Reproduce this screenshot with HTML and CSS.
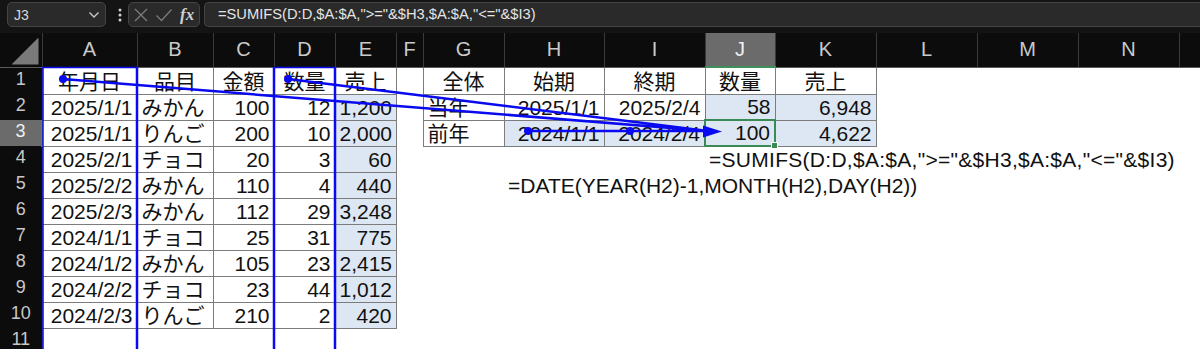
FILE: index.html
```html
<!DOCTYPE html>
<html lang="ja">
<head>
    <meta charset="UTF-8">
    <meta name="viewport" content="width=device-width, initial-scale=1.0">
    <title>SUMIFS</title>
    <link rel="stylesheet" href="styles.css">
</head>
<body>
<div class="page">
    <div class="toolbar">
        <div class="namebox">
            <span>J3</span>
            <svg class="chev" width="12" height="8" viewBox="0 0 12 8"><path d="M1.5 1.5 L6 6 L10.5 1.5" fill="none" stroke="#c8c8c8" stroke-width="1.4"/></svg>
        </div>
        <svg class="grip" width="6" height="16" viewBox="0 0 6 16"><circle cx="3" cy="3" r="1.5" fill="#cfcfcf"/><circle cx="3" cy="8" r="1.5" fill="#cfcfcf"/><circle cx="3" cy="13" r="1.5" fill="#cfcfcf"/></svg>
        <div class="fxbox">
            <svg width="16" height="16" viewBox="0 0 16 16"><path d="M2 2 L14 14 M14 2 L2 14" stroke="#7c7c7c" stroke-width="1.3"/></svg>
            <svg width="18" height="16" viewBox="0 0 18 16"><path d="M1.5 8.5 L6.5 13.5 L16.5 2.5" fill="none" stroke="#7c7c7c" stroke-width="1.3"/></svg>
            <span class="fx">fx</span>
        </div>
        <div class="formula">=SUMIFS(D:D,$A:$A,"&gt;="&amp;$H3,$A:$A,"&lt;="&amp;$I3)</div>
    </div>

    <table class="sheet">
        <colgroup>
            <col style="width:42px"><col style="width:95px"><col style="width:76px"><col style="width:61px">
            <col style="width:61px"><col style="width:61px"><col style="width:27px"><col style="width:81px">
            <col style="width:100px"><col style="width:101px"><col style="width:70px"><col style="width:101px">
            <col style="width:101px"><col style="width:101px"><col style="width:101px"><col style="width:21px">
        </colgroup>
        <tr class="head">
            <th class="corner"><span class="tri"></span></th>
            <th>A</th><th>B</th><th>C</th><th>D</th><th>E</th><th>F</th><th>G</th>
            <th>H</th><th>I</th><th class="sel">J</th><th>K</th><th>L</th><th>M</th><th>N</th><th></th>
        </tr>
        <tr class="r1">
            <th class="rh">1</th>
            <td class="b c">年月日</td><td class="b c">品目</td><td class="b c">金額</td><td class="b c">数量</td><td class="b c">売上</td>
            <td></td>
            <td class="b c">全体</td><td class="b c">始期</td><td class="b c">終期</td><td class="b c">数量</td><td class="b c">売上</td>
            <td></td><td></td><td></td><td></td>
        </tr>
        <tr>
            <th class="rh">2</th>
            <td class="b n">2025/1/1</td><td class="b">みかん</td><td class="b n">100</td><td class="b n">12</td><td class="b n fill">1,200</td>
            <td></td>
            <td class="b">当年</td><td class="b n">2025/1/1</td><td class="b n">2025/2/4</td><td class="b n fill">58</td><td class="b n fill">6,948</td>
            <td></td><td></td><td></td><td></td>
        </tr>
        <tr>
            <th class="rh sel">3</th>
            <td class="b n">2025/1/1</td><td class="b">りんご</td><td class="b n">200</td><td class="b n">10</td><td class="b n fill">2,000</td>
            <td></td>
            <td class="b">前年</td><td class="b n fill">2024/1/1</td><td class="b n fill">2024/2/4</td><td class="b n fill active">100</td><td class="b n fill">4,622</td>
            <td></td><td></td><td></td><td></td>
        </tr>
        <tr>
            <th class="rh">4</th>
            <td class="b n">2025/2/1</td><td class="b">チョコ</td><td class="b n">20</td><td class="b n">3</td><td class="b n fill">60</td>
            <td></td><td></td><td></td><td></td>
            <td class="txt">=SUMIFS(D:D,$A:$A,"&gt;="&amp;$H3,$A:$A,"&lt;="&amp;$I3)</td>
            <td></td><td></td><td></td><td></td><td></td>
        </tr>
        <tr>
            <th class="rh">5</th>
            <td class="b n">2025/2/2</td><td class="b">みかん</td><td class="b n">110</td><td class="b n">4</td><td class="b n fill">440</td>
            <td></td><td></td>
            <td class="txt txt-h">=DATE(YEAR(H2)-1,MONTH(H2),DAY(H2))</td>
            <td></td><td></td><td></td><td></td><td></td><td></td><td></td>
        </tr>
        <tr>
            <th class="rh">6</th>
            <td class="b n">2025/2/3</td><td class="b">みかん</td><td class="b n">112</td><td class="b n">29</td><td class="b n fill">3,248</td>
            <td></td><td></td><td></td><td></td><td></td><td></td><td></td><td></td><td></td><td></td>
        </tr>
        <tr>
            <th class="rh">7</th>
            <td class="b n">2024/1/1</td><td class="b">チョコ</td><td class="b n">25</td><td class="b n">31</td><td class="b n fill">775</td>
            <td></td><td></td><td></td><td></td><td></td><td></td><td></td><td></td><td></td><td></td>
        </tr>
        <tr>
            <th class="rh">8</th>
            <td class="b n">2024/1/2</td><td class="b">みかん</td><td class="b n">105</td><td class="b n">23</td><td class="b n fill">2,415</td>
            <td></td><td></td><td></td><td></td><td></td><td></td><td></td><td></td><td></td><td></td>
        </tr>
        <tr>
            <th class="rh">9</th>
            <td class="b n">2024/2/2</td><td class="b">チョコ</td><td class="b n">23</td><td class="b n">44</td><td class="b n fill">1,012</td>
            <td></td><td></td><td></td><td></td><td></td><td></td><td></td><td></td><td></td><td></td>
        </tr>
        <tr>
            <th class="rh">10</th>
            <td class="b n">2024/2/3</td><td class="b">りんご</td><td class="b n">210</td><td class="b n">2</td><td class="b n fill">420</td>
            <td></td><td></td><td></td><td></td><td></td><td></td><td></td><td></td><td></td><td></td>
        </tr>
        <tr>
            <th class="rh">11</th>
            <td></td><td></td><td></td><td></td><td></td><td></td><td></td><td></td><td></td><td></td><td></td><td></td><td></td><td></td><td></td>
        </tr>
    </table>

    <!-- 参照元のトレース矢印 -->
    <svg class="arrows" width="1200" height="349" viewBox="0 0 1200 349">
        <g stroke="#0a0af0" fill="none">
            <path d="M43 67.5 V349 M42 67.5 H137" stroke-width="1.5"/>
            <path d="M137 67 V349" stroke-width="2.5"/>
            <path d="M274 67.5 H335" stroke-width="1.5"/>
            <path d="M274 67 V349 M335 67 V349" stroke-width="2.5"/>
            <path d="M63 79 L708 131 M288 79 L708 131 M528 131 H708" stroke-width="2.5"/>
        </g>
        <g fill="#0a0af0">
            <circle cx="63" cy="79" r="4"/>
            <circle cx="288" cy="79" r="4"/>
            <circle cx="528" cy="131" r="4"/>
            <circle cx="630" cy="131" r="4"/>
            <polygon points="703,125.5 722,131.5 703,137.5"/>
        </g>
    </svg>
</div>
</body>
</html>
```

FILE: styles.css
```css
body {
    margin: 0;
    background-color: #0c0c0c;
    font-family: 'Liberation Sans', 'Noto Sans CJK JP', sans-serif;
}

.page {
    position: relative;
    width: 1200px;
    height: 349px;
    overflow: hidden;
}

.toolbar {
    display: flex;
    align-items: flex-start;
    height: 33px;
    padding-top: 2px;
    box-sizing: border-box;
    background-color: #141414;
}

.namebox {
    display: flex;
    align-items: center;
    justify-content: space-between;
    width: 99px;
    height: 25px;
    margin-left: 7px;
    padding: 0 5px 0 6px;
    box-sizing: border-box;
    background-color: #2a2a2a;
    border: 1px solid #444;
    border-radius: 5px;
    color: #d8d8d8;
    font-size: 14px;
}

.grip {
    margin: 5px 0 0 11px;
}

.fxbox {
    display: flex;
    align-items: center;
    gap: 6px;
    width: 72px;
    height: 25px;
    margin-left: 5px;
    padding-left: 4px;
    box-sizing: border-box;
    background-color: #2a2a2a;
    border: 1px solid #444;
    border-radius: 5px;
}

.fx {
    font-family: 'Liberation Serif', serif;
    font-style: italic;
    font-weight: bold;
    font-size: 17px;
    color: #cfcfcf;
    margin-left: 1px;
}

.formula {
    flex: 1;
    height: 25px;
    margin-left: 4px;
    padding-left: 13px;
    box-sizing: border-box;
    background-color: #2a2a2a;
    border: 1px solid #444;
    border-right: none;
    border-radius: 5px 0 0 5px;
    color: #e4e4e4;
    font-size: 14.7px;
    line-height: 23px;
    white-space: nowrap;
}

.sheet {
    table-layout: fixed;
    width: 1200px;
    border-collapse: collapse;
    background-color: #fff;
}

.sheet tr {
    height: 26px;
}

.sheet tr.head {
    height: 34px;
}

.sheet tr.r1 {
    height: 27px;
}

.sheet td {
    padding: 0 4px;
    font-size: 21px;
    line-height: 24px;
    color: #111;
    vertical-align: bottom;
    white-space: nowrap;
    overflow: visible;
}

.head th {
    padding: 0;
    background-color: #0c0c0c;
    border-right: 1px solid #3a3a3a;
    border-bottom: 1px solid #5a5a5a;
    color: #cacaca;
    font-weight: normal;
    font-size: 20px;
}

.head th.sel {
    background-color: #6b6b6b;
    color: #f0f0f0;
    border-bottom: 2px solid #3f8f5a;
}

.corner {
    position: relative;
}

.tri {
    position: absolute;
    right: 3px;
    bottom: 2px;
    width: 27px;
    height: 27px;
    background-color: #7a7a7a;
    clip-path: polygon(100% 0, 100% 100%, 0 100%);
}

.rh {
    padding: 1px 0 0;
    background-color: #0c0c0c;
    border-right: 1px solid #5a5a5a;
    color: #c8c8c8;
    font-weight: normal;
    font-size: 18px;
    line-height: 20px;
    vertical-align: top;
    text-align: center;
}

.rh.sel {
    background-color: #6b6b6b;
    color: #f0f0f0;
    border-right: 2px solid #3f8f5a;
}

.b {
    border: 1px solid #7c7c7c;
}

.c {
    text-align: center;
}

.n {
    text-align: right;
}

.fill {
    background-color: #dde7f3;
}

.active {
    position: relative;
    border: 2px solid #3a8a55;
}

.active::after {
    content: "";
    position: absolute;
    right: -4px;
    bottom: -4px;
    width: 5px;
    height: 5px;
    background-color: #3a8a55;
    border: 1px solid #fff;
}

.txt {
    padding-left: 4px;
    letter-spacing: 0.28px;
}

.txt-h {
    padding-left: 6px;
    letter-spacing: 0;
}

.arrows {
    position: absolute;
    top: 0;
    left: 0;
    pointer-events: none;
}
```
